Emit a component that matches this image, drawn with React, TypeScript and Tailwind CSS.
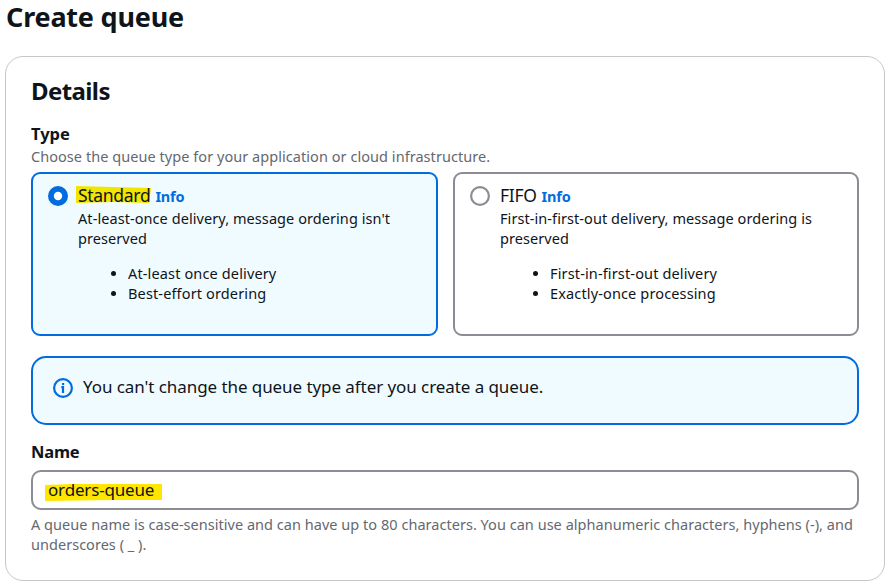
import type { ReactNode } from 'react';

function Radio({ on }: { on?: boolean }) {
  return (
    <svg className="mt-0.5 h-5 w-5 shrink-0" viewBox="0 0 20 20">
      {on ? (
        <>
          <circle cx="10" cy="10" r="10" fill="#006ce0" />
          <circle cx="10" cy="10" r="4.2" fill="#fff" />
        </>
      ) : (
        <circle cx="10" cy="10" r="8.9" fill="#fff" stroke="#8c8c94" strokeWidth="2.2" />
      )}
    </svg>
  );
}

interface TileProps {
  on?: boolean;
  label: ReactNode;
  description: ReactNode;
  items: ReactNode[];
}

function Tile({ on, label, description, items }: TileProps) {
  return (
    <div
      className={
        on
          ? 'flex h-[164px] w-[407px] gap-2.5 rounded-[9px] border-2 border-[#006ce0] bg-[#f0fbff] px-[15px] pt-2.5'
          : 'flex h-[164px] w-[406px] gap-2.5 rounded-[9px] border-2 border-[#8c8c94] bg-white px-[15px] pt-2.5'
      }
    >
      <Radio on={on} />
      <div className="whitespace-nowrap text-[14.5px] leading-5 tracking-[0.07px]">
        <div className="flex h-6 items-baseline gap-[5px] text-[17.5px] leading-[22px] tracking-[-0.3px]">
          {label}
          <span className="text-[14.5px] font-bold tracking-[-0.2px] text-[#006ce0]">Info</span>
        </div>
        <p>{description}</p>
        <ul className="mt-[15px] tracking-[0.14px]">
          {items.map((item, i) => (
            <li key={i} className="flex items-center">
              <span className="mr-3 ml-[33px] h-[5px] w-[5px] rounded-full bg-[#0f141a]" />
              {item}
            </li>
          ))}
        </ul>
      </div>
    </div>
  );
}

function InfoIcon() {
  return (
    <svg className="mt-5 h-5 w-5 shrink-0" viewBox="0 0 20 20" fill="none">
      <circle cx="10" cy="10" r="8.9" stroke="#006ce0" strokeWidth="2.2" />
      <path d="M8.3 9.2H10v5.8M9 6h2.2" stroke="#006ce0" strokeWidth="2.2" />
    </svg>
  );
}

export default function App() {
  return (
    <div className="h-[586px] w-[895px] bg-white pl-[5px] font-['Noto_Sans','Open_Sans',sans-serif] text-[#0f141a]">
      <h1 className="h-14 pl-px text-[27px] leading-[34px] font-bold tracking-[-0.2px]">Create queue</h1>
      <main className="h-[525px] w-[880px] rounded-[18px] border border-[#c6c6cd] pt-[19px] pl-[25px]">
        <h2 className="h-12 text-[24px] leading-[30px] font-bold tracking-[-0.6px]">Details</h2>
        <h3 className="h-[22px] text-[16.5px] leading-5 font-bold">Type</h3>
        <p className="h-[26px] text-[14.5px] leading-5 tracking-[0.05px] text-[#656871]">
          Choose the queue type for your application or cloud infrastructure.
        </p>
        <div className="flex gap-[15px]">
          <Tile
            on
            label={
              <span className="relative isolate">
                <svg className="absolute top-0.5 -left-0.5 -z-10 h-[18px] w-[75px]" viewBox="0 0 75 18">
                  <path d="M0 0L75 2L73 17L36 16L0 17Z" fill="#f2e600" />
                </svg>
                Standard
              </span>
            }
            description={
              <>
                At-least-once delivery, message ordering isn't
                <br />
                preserved
              </>
            }
            items={['At-least once delivery', 'Best-effort ordering']}
          />
          <Tile
            label={<span>FIFO</span>}
            description={
              <>
                First-in-first-out delivery, message ordering is
                <br />
                preserved
              </>
            }
            items={['First-in-first-out delivery', 'Exactly-once processing']}
          />
        </div>
        <div className="mt-5 flex h-[69px] w-[828px] gap-2.5 rounded-[15px] border-2 border-[#006ce0] bg-[#f0fbff] pl-5">
          <InfoIcon />
          <p className="mt-[17px] text-[17px] leading-6 tracking-[-0.07px]">
            You can't change the queue type after you create a queue.
          </p>
        </div>
        <h3 className="mt-[17px] h-7 text-[16.5px] leading-5 font-bold tracking-[-0.2px]">Name</h3>
        <div className="flex h-10 w-[828px] items-center rounded-[10px] border-2 border-[#8c8c94] bg-white pl-[15px]">
          <span className="relative isolate text-[17px] leading-6 tracking-[-0.17px]">
            <svg className="absolute top-1.5 -left-[3px] -z-10 h-[18px] w-[117px]" viewBox="0 0 117 18">
              <path d="M0 1L27 0H117V16H70L0 17Z" fill="#ffe600" />
            </svg>
            orders-queue
          </span>
        </div>
        <p className="mt-1 text-[14.5px] leading-5 tracking-[0.03px] text-[#656871]">
          <span className="whitespace-nowrap">
            A queue name is case-sensitive and can have up to 80 characters. You can use alphanumeric characters, hyphens (-), and
          </span>
          <br />
          underscores ( _ ).
        </p>
      </main>
    </div>
  );
}
